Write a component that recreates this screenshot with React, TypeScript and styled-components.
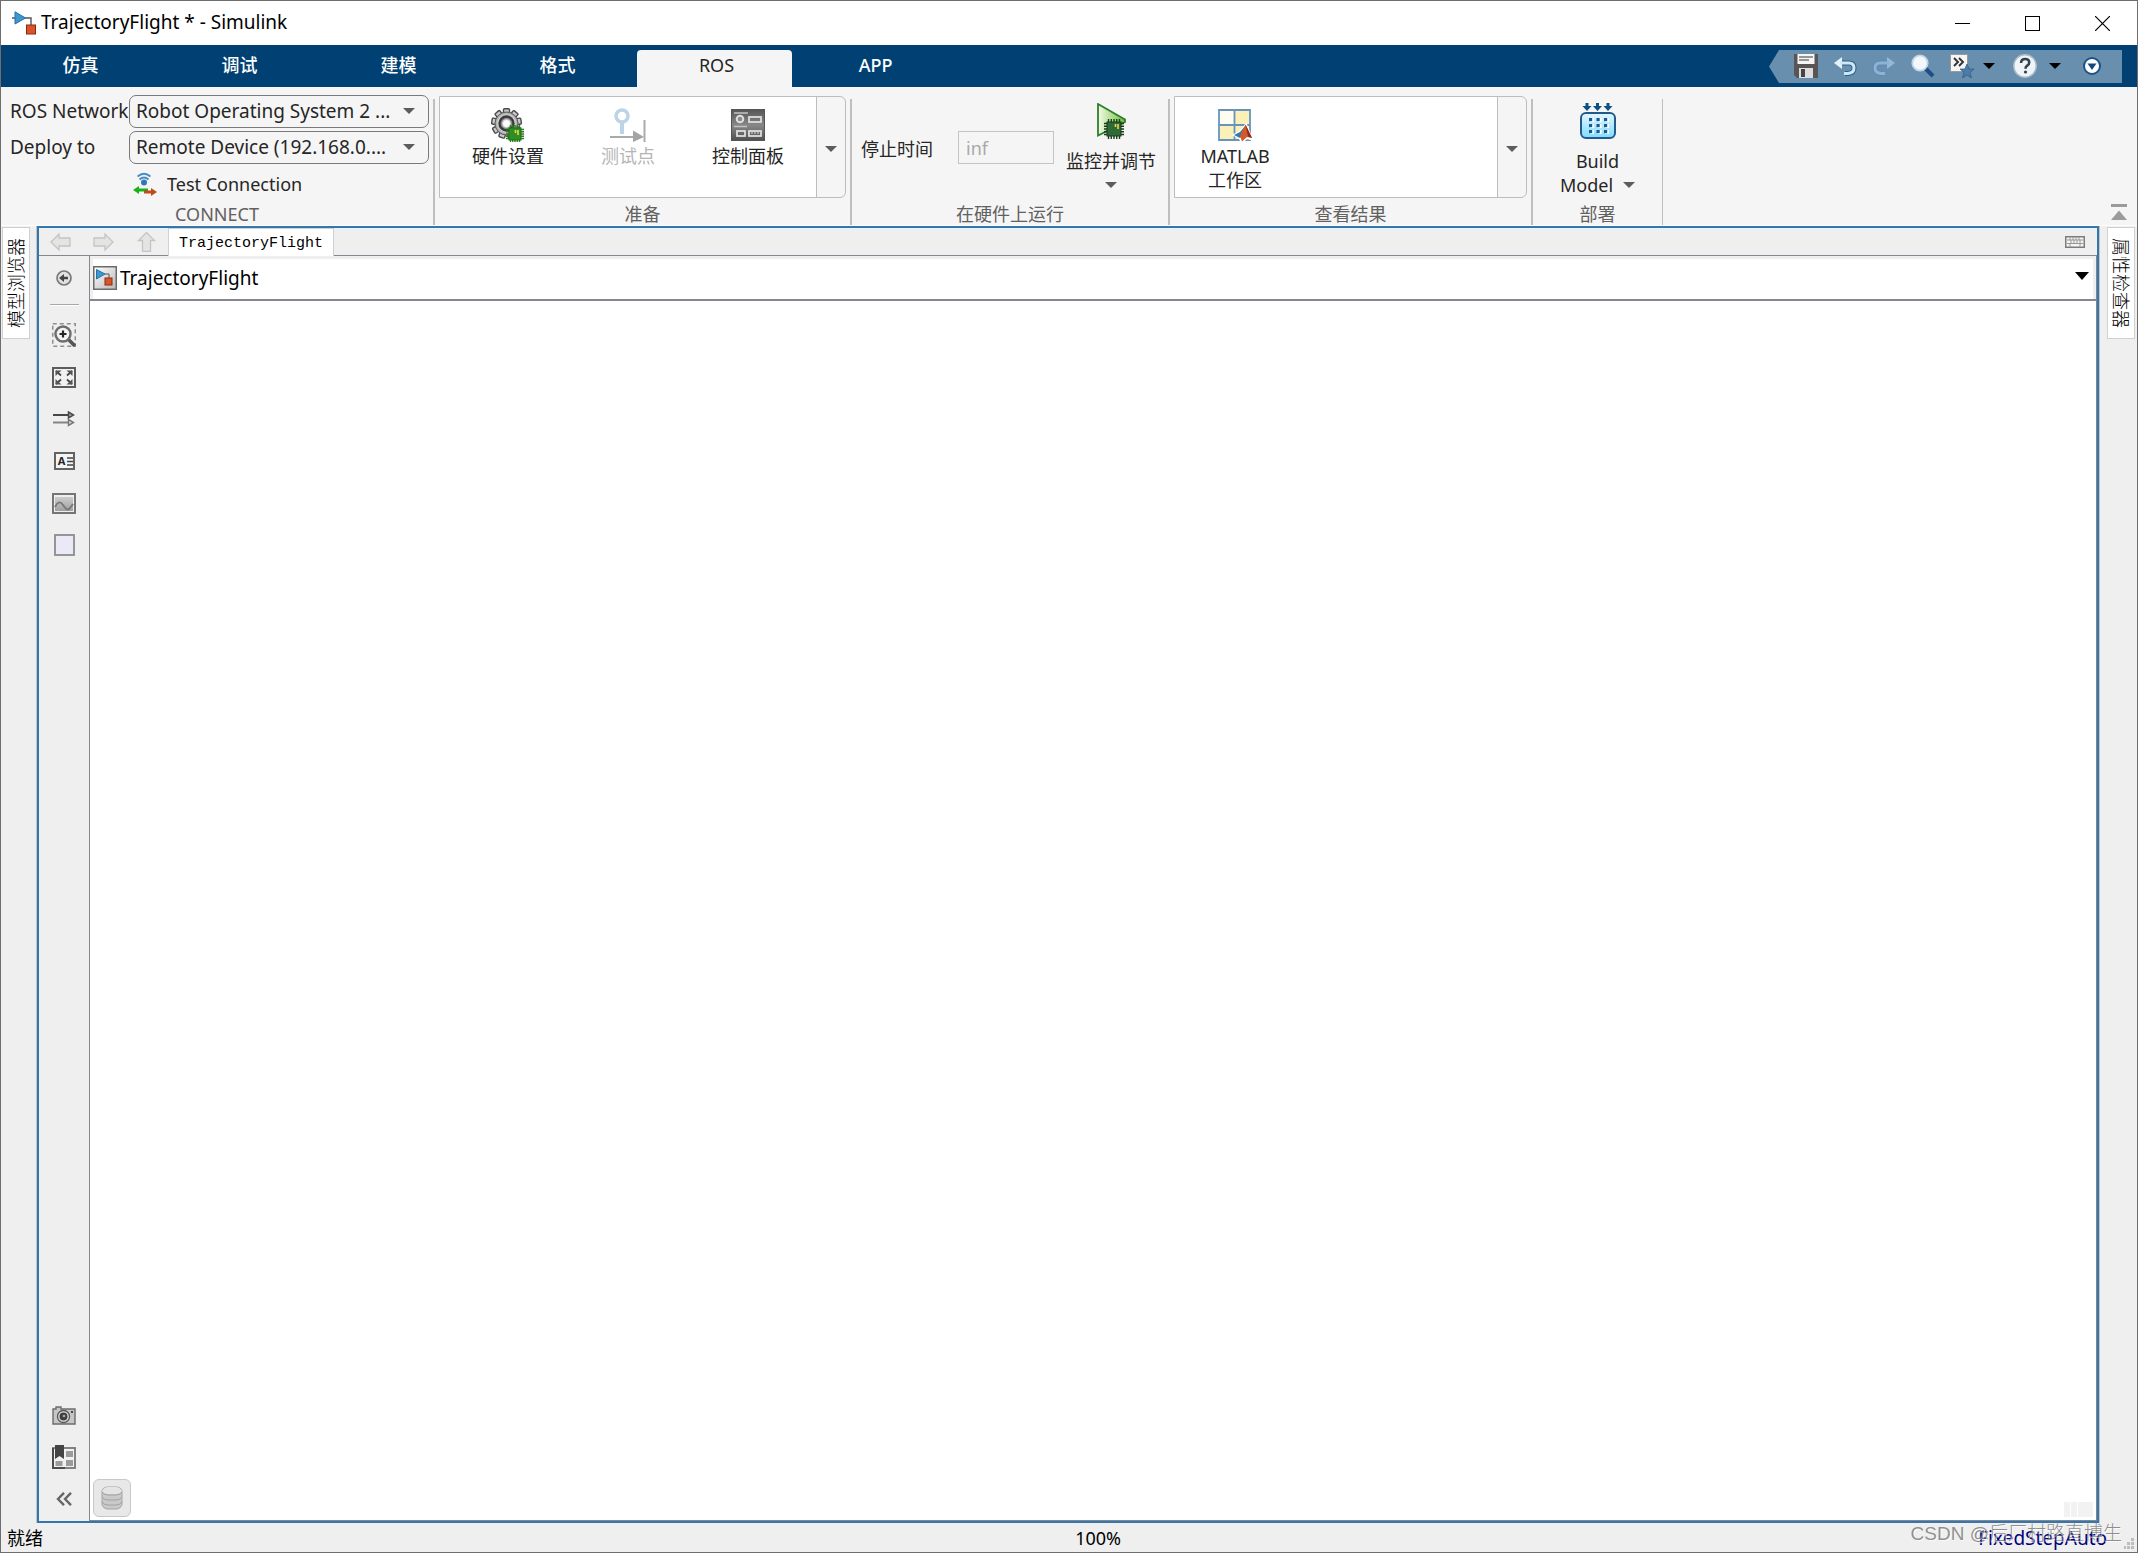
import React from "react";
import styled, { createGlobalStyle, css } from "styled-components";

const GlobalStyle = createGlobalStyle`
  *, *::before, *::after { box-sizing: border-box; }
  html, body { margin: 0; padding: 0; }
  body, button, input, select {
    font-family: "Noto Sans", "Noto Sans CJK SC", sans-serif;
    font-size: 18px;
    line-height: 24px;
    color: #262626;
  }
  button { margin: 0; padding: 0; border: 0; background: none; }
  svg { display: block; flex: none; }
`;

const Window = styled.div`
  display: flex;
  flex-direction: column;
  height: 100vh;
  min-width: 1200px;
  border: 1px solid #6e6e6e;
  background: #efefef;
  overflow: hidden;
`;

/* Title bar */
const TitleBar = styled.header`
  display: flex;
  align-items: center;
  height: 44px;
  flex: none;
  padding-left: 11px;
  background: #fff;
`;
const Title = styled.h1`
  flex: 1;
  margin: 0 0 0 5px;
  padding-bottom: 2px;
  font-size: 19px;
  line-height: 24px;
  font-weight: 400;
  color: #000;
`;
const CaptionButton = styled.button`
  display: grid;
  place-items: center;
  width: 70px;
  height: 43px;
`;

/* Tab bar */
const TabBar = styled.nav`
  display: flex;
  align-items: stretch;
  height: 42px;
  flex: none;
  background: #004073;
`;
const TabList = styled.div`
  display: flex;
  flex: 1;
  gap: 4px;
  padding-top: 5px;
`;
const Tab = styled.button<{ $active?: boolean }>`
  width: 155px;
  padding: 0 0 7px 4px;
  border-radius: 4px 4px 0 0;
  color: #fff;
  font-weight: 500;
  ${(p) =>
    p.$active &&
    css`
      background: #f5f5f5;
      color: #262626;
      font-weight: 400;
    `}
`;
const QuickAccess = styled.div`
  display: flex;
  align-items: center;
  width: 353px;
  height: 33px;
  margin: 5px 15px 0 0;
  padding: 0 0 1px 25px;
  background: #698fae;
  clip-path: polygon(10px 0, 100% 0, 100% 100%, 10px 100%, 0 50%);
`;
const QuickButton = styled.button<{ $gap?: number }>`
  display: grid;
  place-items: center;
  margin-right: ${(p) => p.$gap ?? 15}px;
`;

/* Toolstrip */
const Toolstrip = styled.section`
  display: flex;
  height: 139px;
  flex: none;
  background: #f5f5f5;
  border-bottom: 1px solid #fff;
`;
const Section = styled.div<{ $width: number; $last?: boolean }>`
  display: flex;
  width: ${(p) => p.$width}px;
  &::after {
    content: "";
    width: ${(p) => (p.$last ? 1 : 2)}px;
    margin-top: 12px;
    background: #bfbfbf;
  }
`;
const SectionInner = styled.div`
  display: flex;
  flex: 1;
  min-width: 0;
  flex-direction: column;
  padding-top: 8px;
`;
const SectionBody = styled.div`
  display: flex;
  flex: 1;
`;
const SectionName = styled.div`
  height: 23px;
  text-align: center;
  color: #616161;
`;
const ConnectGrid = styled.div`
  display: grid;
  flex: 1;
  align-content: start;
  align-items: center;
  grid-template-columns: 119px 300px;
  grid-auto-rows: 33px;
  row-gap: 3px;
  padding-left: 9px;
`;
const FieldLabel = styled.label`
  padding-bottom: 1px;
  font-size: 19px;
  white-space: nowrap;
`;
const SelectWrap = styled.div`
  position: relative;
  height: 33px;
  svg {
    position: absolute;
    right: 14px;
    top: 13px;
    pointer-events: none;
  }
`;
const Select = styled.select`
  appearance: none;
  width: 100%;
  height: 33px;
  padding: 0 30px 1px 6px;
  border: 1px solid #7a7a7a;
  border-radius: 7px;
  background: #f5f5f5;
  font-size: 19px;
`;
const TestButton = styled.button`
  grid-column: 2;
  justify-self: start;
  display: flex;
  align-items: center;
  gap: 10px;
  padding-left: 4px;
`;

const Gallery = styled.div`
  display: flex;
  flex: 1;
  height: 102px;
  margin: 1px 4px 0;
  border: 1px solid #bdbdbd;
  border-radius: 0 6px 6px 0;
  overflow: hidden;
`;
const GalleryItems = styled.div<{ $pad?: number }>`
  display: flex;
  flex: 1;
  padding-left: ${(p) => p.$pad ?? 0}px;
  background: #fff;
`;
const GalleryItem = styled.button`
  display: flex;
  flex-direction: column;
  align-items: center;
  width: 120px;
  padding-top: 11px;
  &:disabled { color: #b5b5b5; }
  svg { margin-bottom: 2px; }
`;
const GalleryMore = styled.button`
  display: grid;
  place-items: center;
  width: 29px;
  padding-top: 3px;
  border-left: 1px solid #bdbdbd;
`;

const StopLabel = styled.label`
  width: 106px;
  padding: 42px 0 0 9px;
`;
const StopInput = styled.input`
  width: 96px;
  height: 33px;
  margin-top: 36px;
  padding: 0 7px;
  border: 1px solid #c4c4c4;
  background: #f5f5f5;
  &:disabled { color: #a9a9a9; }
`;
const BigButton = styled.button`
  display: flex;
  flex: 1;
  flex-direction: column;
  align-items: center;
  padding-top: 8px;
  white-space: nowrap;
`;
const BigLabel = styled.span`
  margin-top: 10px;
`;
const ArrowLine = styled.span`
  display: flex;
  align-items: center;
  gap: 10px;
  height: 24px;
`;
const Spacer = styled.div`
  flex: 1;
`;
const CollapseButton = styled.button`
  align-self: flex-end;
  margin: 0 10px 5px 0;
`;

/* Work area */
const WorkArea = styled.main`
  display: flex;
  flex: 1;
  min-height: 0;
`;
const Dock = styled.aside<{ $side: "left" | "right" }>`
  width: ${(p) => (p.$side === "left" ? 36 : 38)}px;
  padding: 1px 0 0 ${(p) => (p.$side === "left" ? 1 : 7)}px;
  border-${(p) => (p.$side === "left" ? "right" : "left")}: 1px solid #c4c4c4;
`;
const DockTab = styled.button<{ $side: "left" | "right" }>`
  display: grid;
  place-items: center;
  width: 28px;
  height: 112px;
  border: 1px solid #d0d0d0;
  background: #fff;
  line-height: 26px;
  font-weight: 300;
  color: #000;
  writing-mode: vertical-rl;
  text-orientation: sideways;
  ${(p) => p.$side === "left" && "transform: rotate(180deg);"}
`;
const Editor = styled.section`
  display: flex;
  flex: 1;
  min-width: 0;
  flex-direction: column;
  border: 2px solid #3277ad;
`;
const DocTabs = styled.div`
  display: flex;
  align-items: center;
  height: 28px;
  flex: none;
  padding-left: 11px;
  border-bottom: 1px solid #868690;
`;
const NavButton = styled.button`
  margin-right: 22px;
`;
const DocTab = styled.button`
  align-self: stretch;
  width: 166px;
  margin: 0 0 -1px -11px;
  padding-top: 3px;
  border: 1px solid #d0d0d0;
  border-bottom: 0;
  background: #fff;
  color: #000;
  font-family: "Liberation Mono", monospace;
  font-size: 15px;
  line-height: 24px;
`;
const KeyboardButton = styled.button`
  margin-right: 12px;
`;
const EditorBody = styled.div`
  display: flex;
  flex: 1;
  min-height: 0;
`;
const Palette = styled.div`
  display: flex;
  width: 50px;
  flex: none;
  flex-direction: column;
  align-items: center;
  padding: 1px 0;
`;
const PaletteButton = styled.button`
  display: grid;
  place-items: center;
  width: 42px;
  height: 42px;
`;
const PaletteRule = styled.hr`
  width: 29px;
  height: 2px;
  margin: 5px 0 8px;
  border: 0;
  border-top: 1px solid #a8a8a8;
  background: #fff;
`;
const CanvasColumn = styled.div`
  display: flex;
  flex: 1;
  min-width: 0;
  flex-direction: column;
  border: 1px solid #868690;
  border-top: 0;
`;
const Breadcrumb = styled.div`
  display: flex;
  align-items: center;
  height: 45px;
  flex: none;
  padding-right: 4px;
  border: 3px solid #efefef;
  border-bottom: 0;
  background: #fff;
`;
const BreadcrumbRule = styled.div`
  height: 2px;
  margin-top: -2px;
  flex: none;
  background: #868690;
`;
const Crumb = styled.button`
  display: flex;
  flex: 1;
  align-items: center;
  gap: 3px;
  padding-bottom: 4px;
  color: #000;
  font-size: 19px;
`;
const CrumbArrow = styled.button`
  padding-bottom: 8px;
`;
const Canvas = styled.div`
  display: flex;
  flex: 1;
  align-items: flex-end;
  justify-content: space-between;
  padding: 3px;
  background: #fff;
`;
const DataButton = styled.button`
  display: grid;
  place-items: center;
  width: 38px;
  height: 38px;
  border: 1px solid #c8c8c8;
  border-radius: 6px;
  background: #e8e8e8;
`;
const Blocks = styled.div`
  display: grid;
  grid-template-columns: 6px 6px 15px;
  gap: 1px;
  height: 15px;
  & > i { background: #f2f2f2; }
`;

/* Status bar */
const StatusBar = styled.footer`
  position: relative;
  display: grid;
  grid-template-columns: 52fr auto 48fr;
  align-items: center;
  height: 29px;
  flex: none;
  padding: 0 30px 0 6px;
  color: #000;
`;
const StatusText = styled.span``;
const Solver = styled.a`
  justify-self: end;
  color: #000080;
  font-size: 19px;
  text-decoration: none;
`;
const Watermark = styled.span`
  position: absolute;
  right: 15px;
  bottom: 6px;
  color: rgba(110, 110, 110, 0.75);
  text-shadow: 1px 1px 0 rgba(255, 255, 255, 0.7);
  font-family: "Liberation Sans", "Noto Sans CJK SC", sans-serif;
  font-size: 19px;
  font-weight: 300;
  white-space: nowrap;
  pointer-events: none;
`;
const Grip = styled.svg`
  position: absolute;
  right: 3px;
  bottom: 3px;
`;

const Arrow = ({ w = 12, h = 6, color = "#5c5c5c" }: { w?: number; h?: number; color?: string }) => (
  <svg width={w} height={h} viewBox="0 0 12 6" preserveAspectRatio="none"><path d="M0 0H12L6 6Z" fill={color} /></svg>
);

const BlocksGlyph = ({ size = 24 }: { size?: number }) => (
  <svg width={size} height={size} viewBox="0 0 24 24">
    <path d="M0 7h3M13 7h6v7" stroke="#555" strokeWidth="1.4" fill="none" />
    <path d="M3 .8 13.5 7 3 13Z" fill="#3f97cf" stroke="#2272aa" />
    <rect x="14.5" y="14" width="9" height="9" fill="#d9542b" stroke="#8c2a10" />
  </svg>
);

const ModelIcon = () => (
  <svg width="24" height="24" viewBox="0 0 24 24">
    <defs><linearGradient id="mi" x2="1" y2="1"><stop offset="0" stopColor="#fff" /><stop offset="1" stopColor="#b9b9b9" /></linearGradient></defs>
    <rect x=".75" y=".75" width="22.5" height="22.5" fill="url(#mi)" stroke="#6b6b6b" strokeWidth="1.5" />
    <path d="M11 8h5v4" stroke="#555" fill="none" />
    <path d="M3.5 3.5 12 8l-8.500 5Z" fill="#3f97cf" stroke="#2272aa" />
    <rect x="12" y="12" width="7" height="7" fill="#d9542b" stroke="#8c2a10" />
  </svg>
);

const WifiIcon = () => (
  <svg width="24" height="24" viewBox="0 0 24 24">
    <path d="M4.500 4.500Q11 -1 17.500 4.500M6.500 7.500Q11 3.500 15.500 7.500" fill="none" stroke="#4a8bc4" strokeWidth="1.8" />
    <circle cx="11" cy="10.500" r="3" fill="#2f78b7" />
    <path d="M0 18l6-4v2.500h9v3H6V22Z" fill="#17b317" />
    <path d="M24 20l-6-4v2.500h-7v3h7V24Z" fill="#c24a21" />
  </svg>
);

const pins = [0, 1, 2, 3, 4];
const Chip = ({ x, y, s, dark }: { x: number; y: number; s: number; dark?: boolean }) => (
  <g>
    {pins.map((i) => {
      const o = 1.5 + (i * (s - 3)) / 4;
      return (
        <path key={i} d={`M${x + o} ${y - 3}v${s + 6}M${x - 3} ${y + o}h${s + 6}`} stroke={dark ? "#1d3b1d" : "#2d7d1f"} strokeWidth="1.4" />
      );
    })}
    <rect x={x} y={y} width={s} height={s} fill={dark ? "#2e6b34" : "#2f8f24"} stroke={dark ? "#173a1a" : "#1f6e18"} />
    <path d={`M${x + s - 5.500} ${y + 2}v3M${x + s - 3} ${y + 2}v5`} stroke="#f2d34a" strokeWidth="1.6" />
  </g>
);

const teeth = [0, 40, 80, 120, 160, 200, 240, 280, 320];
const HardwareIcon = () => (
  <svg width="34" height="34" viewBox="0 0 34 34">
    <defs><radialGradient id="gear"><stop offset=".35" stopColor="#666" /><stop offset=".7" stopColor="#d8d8d8" /><stop offset="1" stopColor="#9a9a9a" /></radialGradient></defs>
    {teeth.map((a) => (
      <rect key={a} x="12.500" y="0.7" width="6" height="8" rx="1" fill="#c9c9c9" stroke="#4a4a4a" strokeWidth="1.4" transform={`rotate(${a} 15.500 15.500)`} />
    ))}
    <circle cx="15.500" cy="15.500" r="11.500" fill="url(#gear)" stroke="#5a5a5a" />
    <circle cx="15.500" cy="15.500" r="7" fill="#8c8c8c" stroke="#3c3c3c" strokeWidth="2.400" />
    <circle cx="15.500" cy="15.500" r="4" fill="#fff" stroke="#ccc" />
    <Chip x={18} y={20} s={12} />
  </svg>
);

const TestPointIcon = () => (
  <svg width="36" height="34" viewBox="0 0 36 34">
    <circle cx="12" cy="8" r="6" fill="#fff" stroke="#bcd3e8" strokeWidth="3.500" />
    <path d="M12 15v11" stroke="#bcd3e8" strokeWidth="4" />
    <path d="M0 29h30M34.500 12v22" stroke="#aaa" strokeWidth="2" />
    <path d="M23 22.500 34 29 23 34Z" fill="#a4a4a4" />
  </svg>
);

const PanelIcon = () => (
  <svg width="34" height="34" viewBox="0 0 34 34">
    <defs><linearGradient id="pn" x2="0" y2="1"><stop offset="0" stopColor="#555" /><stop offset=".5" stopColor="#888" /><stop offset="1" stopColor="#505050" /></linearGradient></defs>
    <rect x=".5" y="1.500" width="33" height="31" fill="url(#pn)" stroke="#555" />
    <path d="M3 5h14M3 18.500h13" stroke="#c4c4c4" strokeWidth="1.600" />
    <circle cx="9" cy="11" r="3.300" fill="#8a8a8a" stroke="#ddd" strokeWidth="2" />
    <g fill="none" stroke="#ddd" strokeWidth="1.800"><rect x="18" y="9" width="12" height="5" /><rect x="6" y="23" width="8" height="5" /><rect x="18" y="23" width="12" height="5" /></g>
    <path d="M21 24v2M24 24v2M27 24v2" stroke="#ddd" />
  </svg>
);

const MonitorIcon = () => (
  <svg width="36" height="36" viewBox="0 0 36 36">
    <defs><linearGradient id="pl" x2="1"><stop offset="0" stopColor="#f4fbe8" /><stop offset="1" stopColor="#6cc13a" /></linearGradient></defs>
    <path d="M5 1 32 16.500V19L5 32.500Z" fill="url(#pl)" stroke="#2f7d2a" strokeWidth="1.800" />
    <Chip x={14} y={19} s={14} dark />
  </svg>
);

const WorkspaceIcon = () => (
  <svg width="34" height="34" viewBox="0 0 34 34">
    <rect x="1" y="2" width="31" height="30" fill="#fbf1b8" />
    <path d="M1 2h15v15H1Z" fill="#fffdf0" />
    <path d="M1 2h31v30H1ZM16.500 2v30M1 17h31" fill="none" stroke="#6794bd" strokeWidth="1.800" />
    <path d="M16 27l6-3 6-7.500 6 15-5-1.500-5 4-3-4.500Z" fill="#fff" stroke="#fff" strokeWidth="2" />
    <path d="M16 27l6-3 5-6-2 9-3 3Z" fill="#3878a8" />
    <path d="M22 28l5.500-11.500L34 30l-5-1-5 4.500Z" fill="#d4582a" />
    <path d="M27.500 16.500 34 30l-4-1.500Z" fill="#8e2a14" />
  </svg>
);

const BuildIcon = () => (
  <svg width="36" height="36" viewBox="0 0 36 36">
    <defs><linearGradient id="bd" x2="0" y2="1"><stop offset="0" stopColor="#e6f7ff" /><stop offset="1" stopColor="#7edcff" /></linearGradient></defs>
    {[7, 17.500, 28].map((x) => (
      <path key={x} d={`M${x - 1.500} 0h3v3h3L${x} 8l-4.500-5h3Z`} fill="#0e5083" />
    ))}
    <rect x="1" y="10" width="34" height="25" rx="5" fill="url(#bd)" stroke="#235a8e" strokeWidth="2" />
    {[10, 17.500, 25].map((x) => [15, 21, 27].map((y) => (
      <g key={`${x}-${y}`}><rect x={x} y={y} width="4" height="4" fill="#fff" /><rect x={x - 1} y={y} width="3.200" height="3.200" fill="#155a96" /></g>
    )))}
  </svg>
);

const SaveIcon = () => (
  <svg width="24" height="24" viewBox="0 0 24 24">
    <path d="M0 0h24v24H3l-3-3Z" fill="#5a5554" />
    <path d="M3.500 0h17v10h-17Z" fill="#f5f5f5" /><path d="M5 3h14M5 6h10" stroke="#777" strokeWidth="1.400" />
    <path d="M5 14h14v10H5Z" fill="#ddd" /><path d="M7 15h4v8H7Z" fill="#444" />
  </svg>
);
const UndoIcon = ({ dim }: { dim?: boolean }) => (
  <svg width="24" height="24" viewBox="0 0 24 24">
    <g transform={dim ? "translate(24 0) scale(-1 1)" : undefined}>
      <path d="M7 9h9q5 0 5 5t-6 5.500h-3" fill="none" stroke={dim ? "#5c8bb5" : "#2b628f"} strokeWidth="5" />
      <path d="M1 9l8-6v12Z" fill={dim ? "#96b8d4" : "#e3f1fa"} />
      <path d="M7 9h9q5 0 5 5t-6 5.500h-4" fill="none" stroke={dim ? "#8db3d2" : "#cfe6f5"} strokeWidth="3" />
    </g>
  </svg>
);
const SearchIcon = () => (
  <svg width="24" height="24" viewBox="0 0 24 24">
    <path d="M14 14l8 8" stroke="#1f4d86" strokeWidth="4" /><circle cx="9" cy="9" r="7.700" fill="#f3f8fc" stroke="#bfd4e5" strokeWidth="1.800" />
  </svg>
);
const FavoriteIcon = () => (
  <svg width="24" height="24" viewBox="0 0 24 24">
    <path d="M.5.5h17v17H.5Z" fill="#f6f6f6" stroke="#999" />
    <path d="M4 4l4 4-4 4M9 4l4 4-4 4" fill="none" stroke="#333" strokeWidth="1.900" />
    <path d="M17 10l2.200 5H24l-4 3.500 1.500 5.500-4.500-3-4.500 3 1.500-5.500-4-3.500h4.800Z" fill="#4d7ba8" stroke="#31577e" strokeWidth=".7" />
  </svg>
);
const HelpIcon = () => (
  <svg width="24" height="24" viewBox="0 0 24 24">
    <circle cx="12" cy="12" r="11.200" fill="#f1f4f7" stroke="#a9bccb" strokeWidth="1.400" />
    <path d="M8 9q.2-4 4.200-4 4 0 4 3.500 0 2-2 3.200-1.700 1-1.700 3" fill="none" stroke="#30434f" strokeWidth="2.600" /><circle cx="12.500" cy="18" r="1.600" fill="#30434f" />
  </svg>
);
const MoreIcon = () => (
  <svg width="18" height="18" viewBox="0 0 18 18">
    <circle cx="9" cy="9" r="8" fill="#fff" stroke="#1d5386" strokeWidth="2" /><path d="M4.500 6.500h9L9 13Z" fill="#12497c" />
  </svg>
);

const NavArrow = ({ angle }: { angle: number }) => (
  <svg width="21" height="20" viewBox="0 0 21 20">
    <path transform={`rotate(${angle} 10.500 10)`} d="M1 10 9 2v4h11v8H9v4Z" fill="#e4e4e4" stroke="#c4c4c4" strokeWidth="1.300" />
  </svg>
);

const KeyboardIcon = () => (
  <svg width="20" height="12" viewBox="0 0 20 12">
    <rect x=".75" y=".75" width="18.500" height="10.500" fill="#f4f4f4" stroke="#7d7d7d" strokeWidth="1.500" />
    <path d="M2 4h16M2 7.500h16M5 1v3M8 1v3M11 1v3M14 1v3M6 4v3.500M9 4v3.500M12 4v3.500M15 4v3.500M5 7.500V11M15 7.500V11" stroke="#999" />
  </svg>
);

const HideIcon = () => (
  <svg width="16" height="16" viewBox="0 0 16 16">
    <circle cx="8" cy="8" r="7" fill="#e2e2e2" stroke="#7a7a7a" strokeWidth="1.700" />
    <path d="M3 8l5-4v2.700h4v2.600H8V12Z" fill="#444" />
  </svg>
);
const ZoomIcon = () => (
  <svg width="24" height="24" viewBox="0 0 24 24">
    <rect x=".75" y=".75" width="22.500" height="22.500" fill="none" stroke="#8f8f8f" strokeWidth="1.500" strokeDasharray="4 3" />
    <path d="M16 16l7 7" stroke="#555" strokeWidth="3.600" /><circle cx="11" cy="11" r="7.500" fill="#f3f3f3" stroke="#6c6c6c" strokeWidth="2.400" />
    <path d="M7.500 11h7M11 7.500v7" stroke="#222" strokeWidth="2.200" />
  </svg>
);
const FitIcon = () => (
  <svg width="24" height="21" viewBox="0 0 24 21">
    <rect x="1" y="1" width="22" height="19" fill="#f1f1f1" stroke="#5c5c5c" strokeWidth="2" />
    <path d="M9 8.500 4 4M15 8.500 20 4M9 12.500 4 17M15 12.500 20 17" stroke="#444" strokeWidth="1.800" />
    <path d="M3.500 3.500h6l-6 5.500ZM20.500 3.500h-6l6 5.500ZM3.500 17.500h6l-6-5.500ZM20.500 17.500h-6l6-5.500Z" fill="#555" />
  </svg>
);
const SampleIcon = () => (
  <svg width="22" height="16" viewBox="0 0 22 16">
    <path d="M0 4h16" stroke="#484848" strokeWidth="2" /><path d="M0 11.500h16" stroke="#858585" strokeWidth="2" />
    <path d="M15.500 1v6l5-3Z" fill="#aaa" stroke="#484848" strokeWidth="1.500" /><path d="M15.500 8.500v6l5-3Z" fill="#ddd" stroke="#777" strokeWidth="1.500" />
  </svg>
);
const AnnotationFrame = styled.span`
  display: grid;
  grid-template-columns: 10px 6px;
  align-items: center;
  width: 21px;
  height: 18px;
  padding-left: 1px;
  border: 2px solid #636363;
  background: #f4f4f4;
  font-size: 11px;
  line-height: 14px;
  font-weight: 700;
`;
const ImageIcon = () => (
  <svg width="24" height="21" viewBox="0 0 24 21">
    <defs><linearGradient id="im" x2="0" y2="1"><stop offset="0" stopColor="#ccc" /><stop offset="1" stopColor="#a0a0a0" /></linearGradient></defs>
    <rect x="1" y="1" width="22" height="19" fill="#eee" stroke="#757575" strokeWidth="2" />
    <rect x="3" y="4" width="18" height="14" fill="url(#im)" />
    <path d="M3 14q4-8 8-2t6 4 4-5" fill="none" stroke="#777" strokeWidth="1.800" />
  </svg>
);
const AreaIcon = () => (
  <svg width="21" height="22" viewBox="0 0 21 22"><rect x="1" y="1" width="19" height="20" fill="#e9e9f8" stroke="#8c8c8c" strokeWidth="1.800" /></svg>
);
const CameraIcon = () => (
  <svg width="24" height="19" viewBox="0 0 24 19">
    <path d="M1 3h3V1h5v2h14v15H1Z" fill="#c6c6c6" stroke="#6c6c6c" strokeWidth="1.400" />
    <circle cx="11.500" cy="10.500" r="6" fill="#e6e6e6" stroke="#5a5a5a" strokeWidth="1.400" /><circle cx="11.500" cy="10.500" r="4" fill="#3f3f3f" /><circle cx="12" cy="10" r="1.300" fill="#aaa" />
    <path d="M19 6h2" stroke="#444" strokeWidth="2" />
  </svg>
);
const BookmarkIcon = () => (
  <svg width="24" height="24" viewBox="0 0 24 24">
    <rect x="1" y="3" width="22" height="20" fill="#f1f1f1" stroke="#777" strokeWidth="1.800" />
    <path d="M1 3v20h12" fill="none" stroke="#4c4c4c" strokeWidth="2" />
    <path d="M14 6h7v6h-7ZM14 15h7v6h-7ZM3.500 16h7v5h-7Z" fill="#9b9b9b" />
    <path d="M3 0h9v14l-4.500-3L3 14Z" fill="#444" />
  </svg>
);
const ChevronsIcon = () => (
  <svg width="16" height="14" viewBox="0 0 16 14"><path d="M8 .8 2 7l6 6.200M15 .8 9 7l6 6.200" fill="none" stroke="#666" strokeWidth="2.400" /></svg>
);
const DatabaseIcon = () => (
  <svg width="22" height="24" viewBox="0 0 22 24">
    <path d="M1 4q2-3 5-3h10q3 0 5 3v15q-2 4-5 4H6q-3 0-5-4Z" fill="#c9c9c9" stroke="#a5a5a5" />
    <path d="M1 5q2-4 6-4h8q4 0 6 4-2 3-6 3H7q-4 0-6-3Z" fill="#e4e4e4" />
    <path d="M1 6q2 3 6 3h8q4 0 6-3M1 11q2 3 6 3h8q4 0 6-3M1 16q2 3 6 3h8q4 0 6-3" fill="none" stroke="#a2a2a2" />
  </svg>
);

const tabs = ["仿真", "调试", "建模", "格式", "ROS", "APP"];
const paletteTop: [string, React.ReactNode][] = [
  ["缩放", <ZoomIcon />],
  ["适应窗口", <FitIcon />],
  ["采样时间", <SampleIcon />],
  ["注释", <AnnotationFrame><span>A</span><svg width="6" height="9" viewBox="0 0 6 9"><path d="M0 1h6M0 4.500h6M0 8h6" stroke="#444" strokeWidth="1.300" /></svg></AnnotationFrame>],
  ["图像", <ImageIcon />],
  ["区域", <AreaIcon />],
];
const paletteBottom: [string, React.ReactNode][] = [
  ["截图", <CameraIcon />],
  ["书签", <BookmarkIcon />],
  ["折叠", <ChevronsIcon />],
];

const ToolSection = ({ width, name, last, children }: { width: number; name: string; last?: boolean; children: React.ReactNode }) => (
  <Section $width={width} $last={last}>
    <SectionInner>
      <SectionBody>{children}</SectionBody>
      <SectionName>{name}</SectionName>
    </SectionInner>
  </Section>
);

const Combo = ({ id, label, value }: { id: string; label: string; value: string }) => (
  <>
    <FieldLabel htmlFor={id}>{label}</FieldLabel>
    <SelectWrap>
      <Select id={id}><option>{value}</option></Select>
      <Arrow />
    </SelectWrap>
  </>
);

export default function App() {
  return (
    <Window>
      <GlobalStyle />
      <TitleBar>
        <BlocksGlyph />
        <Title>TrajectoryFlight * - Simulink</Title>
        <CaptionButton aria-label="最小化"><svg width="15" height="15"><path d="M0 7.500h15" stroke="#000" /></svg></CaptionButton>
        <CaptionButton aria-label="最大化"><svg width="15" height="15"><rect x=".5" y=".5" width="14" height="14" fill="none" stroke="#000" /></svg></CaptionButton>
        <CaptionButton aria-label="关闭"><svg width="15" height="15"><path d="M0 0l15 15M15 0 0 15" stroke="#000" strokeWidth="1.200" /></svg></CaptionButton>
      </TitleBar>

      <TabBar>
        <TabList role="tablist">
          {tabs.map((t) => (
            <Tab key={t} role="tab" aria-selected={t === "ROS"} $active={t === "ROS"}>{t}</Tab>
          ))}
        </TabList>
        <QuickAccess>
          <QuickButton aria-label="保存"><SaveIcon /></QuickButton>
          <QuickButton aria-label="撤销"><UndoIcon /></QuickButton>
          <QuickButton aria-label="重做"><UndoIcon dim /></QuickButton>
          <QuickButton aria-label="查找"><SearchIcon /></QuickButton>
          <QuickButton aria-label="收藏" $gap={9}><FavoriteIcon /></QuickButton>
          <QuickButton aria-label="收藏菜单" $gap={18}><Arrow color="#000" /></QuickButton>
          <QuickButton aria-label="帮助" $gap={12}><HelpIcon /></QuickButton>
          <QuickButton aria-label="帮助菜单" $gap={22}><Arrow color="#000" /></QuickButton>
          <QuickButton aria-label="更多"><MoreIcon /></QuickButton>
        </QuickAccess>
      </TabBar>

      <Toolstrip>
        <ToolSection width={434} name="CONNECT">
          <ConnectGrid>
            <Combo id="network" label="ROS Network" value="Robot Operating System 2 ..." />
            <Combo id="deploy" label="Deploy to" value="Remote Device (192.168.0...." />
            <TestButton><WifiIcon />Test Connection</TestButton>
          </ConnectGrid>
        </ToolSection>
        <ToolSection width={417} name="准备">
          <Gallery>
            <GalleryItems $pad={8}>
              <GalleryItem><HardwareIcon />硬件设置</GalleryItem>
              <GalleryItem disabled><TestPointIcon />测试点</GalleryItem>
              <GalleryItem><PanelIcon />控制面板</GalleryItem>
            </GalleryItems>
            <GalleryMore aria-label="更多准备工具"><Arrow /></GalleryMore>
          </Gallery>
        </ToolSection>
        <ToolSection width={318} name="在硬件上运行">
          <StopLabel htmlFor="stop">停止时间</StopLabel>
          <StopInput id="stop" defaultValue="inf" disabled />
          <BigButton>
            <MonitorIcon />
            <BigLabel>监控并调节</BigLabel>
            <ArrowLine><Arrow /></ArrowLine>
          </BigButton>
        </ToolSection>
        <ToolSection width={363} name="查看结果">
          <Gallery>
            <GalleryItems>
              <GalleryItem><WorkspaceIcon /><span>MATLAB<br />工作区</span></GalleryItem>
            </GalleryItems>
            <GalleryMore aria-label="更多结果工具"><Arrow /></GalleryMore>
          </Gallery>
        </ToolSection>
        <ToolSection width={130} name="部署" last>
          <BigButton>
            <BuildIcon />
            <BigLabel>Build</BigLabel>
            <ArrowLine>Model <Arrow /></ArrowLine>
          </BigButton>
        </ToolSection>
        <Spacer />
        <CollapseButton aria-label="折叠工具条">
          <svg width="16" height="16"><path d="M0 0h16v3H0ZM8 6.500 16 16H0Z" fill="#9b9b9b" /></svg>
        </CollapseButton>
      </Toolstrip>

      <WorkArea>
        <Dock $side="left"><DockTab $side="left">模型浏览器</DockTab></Dock>
        <Editor>
          <DocTabs>
            <NavButton aria-label="后退"><NavArrow angle={0} /></NavButton>
            <NavButton aria-label="前进"><NavArrow angle={180} /></NavButton>
            <NavButton aria-label="向上"><NavArrow angle={90} /></NavButton>
            <DocTab>TrajectoryFlight</DocTab>
            <Spacer />
            <KeyboardButton aria-label="键盘快捷方式"><KeyboardIcon /></KeyboardButton>
          </DocTabs>
          <EditorBody>
            <Palette>
              <PaletteButton aria-label="隐藏浏览器"><HideIcon /></PaletteButton>
              <PaletteRule />
              {paletteTop.map(([n, icon]) => <PaletteButton key={n} aria-label={n}>{icon}</PaletteButton>)}
              <Spacer />
              {paletteBottom.map(([n, icon]) => <PaletteButton key={n} aria-label={n}>{icon}</PaletteButton>)}
            </Palette>
            <CanvasColumn>
              <Breadcrumb>
                <Crumb><ModelIcon />TrajectoryFlight</Crumb>
                <CrumbArrow aria-label="模型层次结构"><Arrow w={14} h={8} color="#000" /></CrumbArrow>
              </Breadcrumb>
              <BreadcrumbRule />
              <Canvas>
                <DataButton aria-label="模型数据"><DatabaseIcon /></DataButton>
                <Blocks><i /><i /><i /></Blocks>
              </Canvas>
            </CanvasColumn>
          </EditorBody>
        </Editor>
        <Dock $side="right"><DockTab $side="right">属性检查器</DockTab></Dock>
      </WorkArea>

      <StatusBar>
        <StatusText>就绪</StatusText>
        <span>100%</span>
        <Solver href="#solver">FixedStepAuto</Solver>
        <Watermark>CSDN @后厂村路直博生</Watermark>
        <Grip width="10" height="11"><path d="M7 0h3v3H7ZM3 4h3v3H3ZM7 4h3v3H7ZM0 8h2v3H0ZM3 8h3v3H3ZM7 8h3v3H7Z" fill="#bdbdbd" /></Grip>
      </StatusBar>
    </Window>
  );
}
